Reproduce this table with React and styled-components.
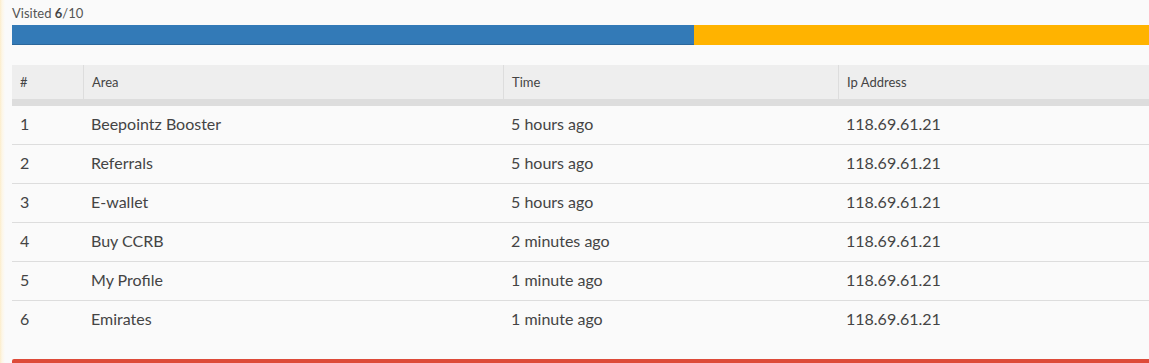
import React from "react";
import styled, { createGlobalStyle } from "styled-components";

const Global = createGlobalStyle`
  html, body { margin: 0; padding: 0; }
  body {
    background: linear-gradient(to right, #fbeccb 0px, #fdf6e6 2px, #fafafa 5px, #fafafa 100%);
    font-family: Lato, "Open Sans", "Liberation Sans", sans-serif;
    color: #444;
    overflow: hidden;
  }
`;

const Page = styled.div`
  padding: 0 0 0 12px;
  height: 363px;
  display: flex;
  flex-direction: column;
`;

const Label = styled.div`
  margin-top: 5px;
  font-size: 13px;
  line-height: 17px;
  color: #555;
  b { font-weight: 700; color: #444; }
`;

const Progress = styled.div`
  margin-top: 3px;
  height: 20px;
  display: flex;
  background: #ffb300;
`;

const Fill = styled.div`
  height: 100%;
  background: #337ab7;
  box-shadow: inset 0 -1px 0 rgba(0, 0, 0, 0.15);
`;

const Table = styled.table`
  margin-top: 20px;
  width: 1137px;
  border-collapse: separate;
  border-spacing: 0;
  table-layout: fixed;
`;

const Col = styled.col`
  width: ${(p) => p.$w}px;
`;

const HeadCell = styled.th`
  height: 34px;
  padding: 0 8px;
  background: #eeeeee;
  border-left: ${(p) => (p.$first ? "none" : "1px solid #dddddd")};
  border-bottom: 7px solid #dddddd;
  text-align: left;
  font-weight: 400;
  font-size: 13px;
  color: #444;
  box-sizing: content-box;
`;

const Cell = styled.td`
  height: 35px;
  padding: 0 8px 3px;
  border-top: ${(p) => (p.$first ? "none" : "1px solid #dddddd")};
  font-size: 16px;
  color: #444;
  box-sizing: content-box;
`;

const Footer = styled.div`
  margin-top: 20px;
  flex: 1;
  border-top: 4px solid #dd4b39;
  border-radius: 2px 0 0 0;
`;

const columns = [
  { title: "#", w: 71 },
  { title: "Area", w: 420 },
  { title: "Time", w: 335 },
  { title: "Ip Address", w: 311 },
];

const rows = [
  ["1", "Beepointz Booster", "5 hours ago", "118.69.61.21"],
  ["2", "Referrals", "5 hours ago", "118.69.61.21"],
  ["3", "E-wallet", "5 hours ago", "118.69.61.21"],
  ["4", "Buy CCRB", "2 minutes ago", "118.69.61.21"],
  ["5", "My Profile", "1 minute ago", "118.69.61.21"],
  ["6", "Emirates", "1 minute ago", "118.69.61.21"],
];

export default function App() {
  const visited = 6;
  const total = 10;
  return (
    <>
      <Global />
      <Page>
        <Label>
          Visited <b>{visited}</b>/{total}
        </Label>
        <Progress>
          <Fill style={{ width: `${(visited / total) * 100}%` }} />
        </Progress>
        <Table>
          <colgroup>
            {columns.map((c) => (
              <Col key={c.title} $w={c.w} />
            ))}
          </colgroup>
          <thead>
            <tr>
              {columns.map((c, i) => (
                <HeadCell key={c.title} $first={i === 0}>
                  {c.title}
                </HeadCell>
              ))}
            </tr>
          </thead>
          <tbody>
            {rows.map((r, i) => (
              <tr key={r[0]}>
                {r.map((v, j) => (
                  <Cell key={j} $first={i === 0}>
                    {v}
                  </Cell>
                ))}
              </tr>
            ))}
          </tbody>
        </Table>
        <Footer />
      </Page>
    </>
  );
}
